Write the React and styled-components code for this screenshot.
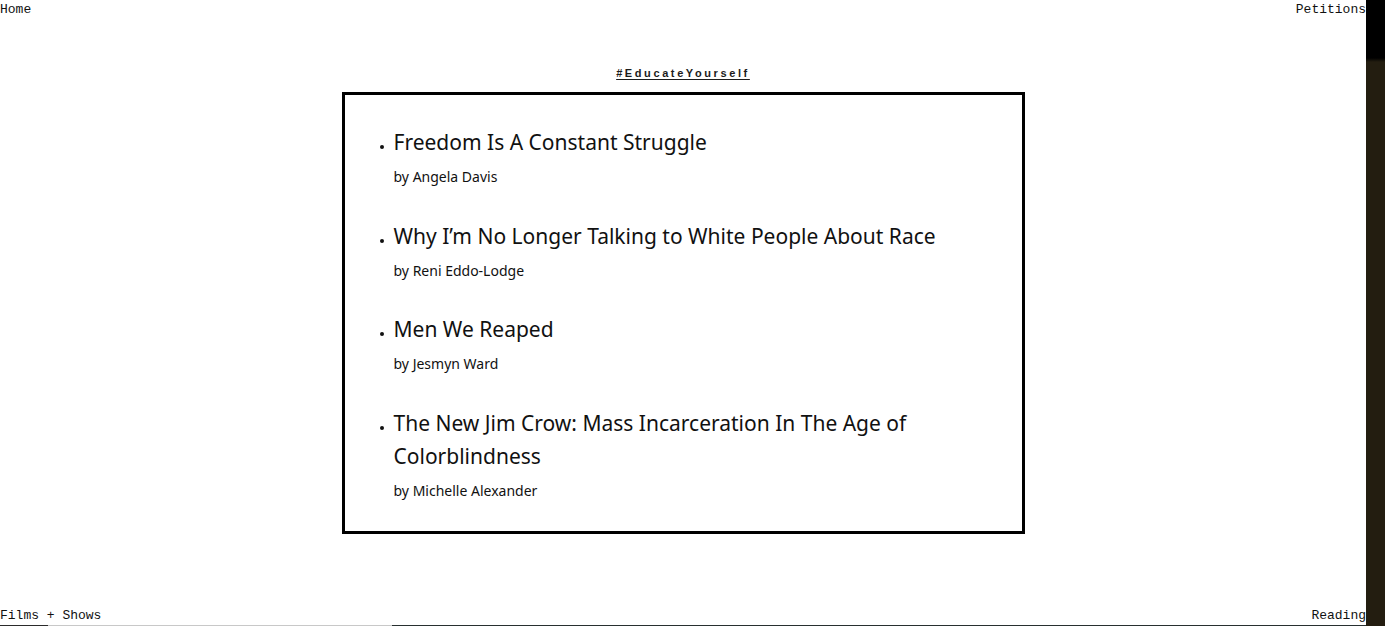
import styled, { createGlobalStyle } from 'styled-components';

const GlobalStyle = createGlobalStyle`
  html, body {
    margin: 0;
    padding: 0;
    background: #ffffff;
    overflow: hidden;
  }
`;

const books = [
  { id: 1, title: 'Freedom Is A Constant Struggle', author: 'Angela Davis' },
  { id: 2, title: 'Why I’m No Longer Talking to White People About Race', author: 'Reni Eddo-Lodge' },
  { id: 3, title: 'Men We Reaped', author: 'Jesmyn Ward' },
  { id: 4, title: 'The New Jim Crow: Mass Incarceration In The Age of Colorblindness', author: 'Michelle Alexander' },
];

function App() {
  return (
    <Page>
      <GlobalStyle />
      <Main>
        <NavRow>
          <NavLink>Home</NavLink>
          <NavLink>Petitions</NavLink>
        </NavRow>
        <Content>
          <PageTitle>#EducateYourself</PageTitle>
          <Card>
            <BookList>
              {books.map((book) => (
                <Book key={book.id}>
                  <Title>{book.title}</Title>
                  <Author>by {book.author}</Author>
                </Book>
              ))}
            </BookList>
          </Card>
        </Content>
        <Footer>
          <NavRow>
            <NavLink>Films + Shows</NavLink>
            <NavLink>Reading</NavLink>
          </NavRow>
          <EdgeLine />
        </Footer>
      </Main>
      <SideStrip />
    </Page>
  );
}

export default App;

const Page = styled.div`
  display: flex;
  width: 1385px;
  height: 626px;
  overflow: hidden;
`;

const Main = styled.div`
  width: 1366px;
  height: 626px;
  display: flex;
  flex-direction: column;
  justify-content: space-between;
`;

const NavRow = styled.nav`
  display: flex;
  justify-content: space-between;
  height: 18px;
  align-items: flex-end;
`;

const NavLink = styled.span`
  font-family: "Liberation Mono", "DejaVu Sans Mono", monospace;
  font-size: 13px;
  line-height: 16px;
  color: #111111;
  cursor: pointer;
`;

const Content = styled.section`
  display: flex;
  flex-direction: column;
  align-items: center;
  margin-bottom: auto;
`;

const PageTitle = styled.h1`
  margin: 48px 0 12px;
  font-family: "Liberation Sans", Arial, sans-serif;
  font-size: 11px;
  font-weight: 700;
  line-height: 14px;
  letter-spacing: 2.6px;
  color: #1c1c1c;
  text-decoration: underline;
  text-underline-offset: 2px;
`;

const Card = styled.div`
  box-sizing: border-box;
  width: 683px;
  border: 3px solid #000000;
  padding: 31px 30px 30px 49px;
`;

const BookList = styled.ul`
  list-style: none;
  margin: 0;
  padding: 0;
  display: flex;
  flex-direction: column;
  gap: 32.5px;
`;

const Book = styled.li`
  position: relative;
  display: flex;
  flex-direction: column;
  gap: 8px;

  &::before {
    content: '';
    position: absolute;
    left: -14px;
    top: 19px;
    width: 4px;
    height: 4px;
    border-radius: 50%;
    background: #111111;
  }
`;

const Title = styled.h2`
  margin: 0;
  font-family: "Noto Sans", "Open Sans", sans-serif;
  font-size: 21px;
  font-weight: 400;
  line-height: 33px;
  color: #111111;
`;

const Author = styled.p`
  margin: 0;
  font-family: "Noto Sans", "Open Sans", sans-serif;
  font-size: 14px;
  line-height: 20px;
  color: #111111;
`;

const Footer = styled.footer`
  display: flex;
  flex-direction: column;
  gap: 1px;
`;

const EdgeLine = styled.div`
  height: 1px;
  background: linear-gradient(to right, #2b2b2b 0 48px, #c8c8c8 48px 392px, #283030 392px);
`;

const SideStrip = styled.div`
  width: 19px;
  height: 626px;
  background: linear-gradient(to bottom, #000000 0 58px, #231d10 62px);
`;
